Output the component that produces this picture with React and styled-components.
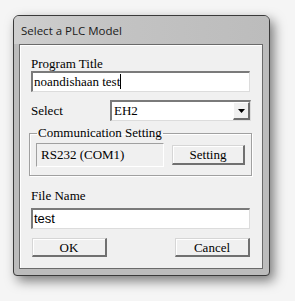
import React from 'react';
import styled, { createGlobalStyle } from 'styled-components';

const GlobalStyle = createGlobalStyle`
  body {
    margin: 0;
    background: #f5f5f5;
  }
`;

const Page = styled.div`
  padding: 15px 0 0 13px;
  height: 301px;
  box-sizing: border-box;
`;

const Window = styled.div`
  width: 257px;
  height: 261px;
  box-sizing: border-box;
  border: 1px solid #3a3a3a;
  border-radius: 6px 6px 4px 4px;
  background: #bcbcbc;
  box-shadow: 4px 5px 12px rgba(0, 0, 0, 0.5);
  display: flex;
  flex-direction: column;
`;

const TitleBar = styled.div`
  height: 28px;
  padding-left: 7px;
  display: flex;
  align-items: center;
  border-radius: 5px 5px 0 0;
  background: linear-gradient(90deg, #cfcfcf 0%, #c3c3c3 40%, #bcbcbc 100%);
  font-family: "Open Sans", "Noto Sans", sans-serif;
  font-size: 11.5px;
  color: #1a1a1a;
`;

const Client = styled.div`
  flex: 1;
  margin: 0 6px 6px 5px;
  border: 1px solid #6a6a6a;
  box-shadow: inset 1px 1px 0 #ffffff;
  background: #f0f0f0;
  padding: 11px 12px 0 11px;
  font-family: "Liberation Serif", "Times New Roman", serif;
  font-size: 13px;
  color: #000;
  display: flex;
  flex-direction: column;
`;

const Label = styled.div`
  height: 15px;
  line-height: 15px;
  margin-top: ${p => p.$top || 0}px;
`;

const TextBox = styled.div`
  height: 21px;
  box-sizing: border-box;
  background: #fff;
  border-style: solid;
  border-width: 2px 1px 1px 2px;
  border-color: #7a7a7a #dcdcdc #dcdcdc #7a7a7a;
  padding-left: 1px;
  line-height: 18px;
  margin-top: ${p => p.$top || 0}px;
  font-family: ${p => (p.$sans ? '"Liberation Sans", Arial, sans-serif' : 'inherit')};
`;

const Caret = styled.span`
  display: inline-block;
  width: 1px;
  height: 15px;
  background: #000;
  vertical-align: -3px;
`;

const SelectRow = styled.div`
  display: flex;
  align-items: center;
  margin-top: 8px;
  height: 21px;
`;

const SelectLabel = styled.div`
  width: 79px;
`;

const Combo = styled.div`
  flex: 1;
  height: 21px;
  box-sizing: border-box;
  display: flex;
  background: #fff;
  border-style: solid;
  border-width: 2px 1px 1px 2px;
  border-color: #7a7a7a #dcdcdc #dcdcdc #7a7a7a;
  margin-right: -1px;
`;

const ComboText = styled.div`
  flex: 1;
  padding-left: 2px;
  line-height: 18px;
`;

const ComboButton = styled.div`
  width: 17px;
  box-sizing: border-box;
  background: #f0f0f0;
  border-style: solid;
  border-width: 1px 2px 2px 1px;
  border-color: #ffffff #6e6e6e #6e6e6e #ffffff;
  display: flex;
  align-items: center;
  justify-content: center;
`;

const Group = styled.fieldset`
  margin: 5px -2px 0 -2px;
  padding: 3px 6px 8px 6px;
  border: 1px solid #a0a0a0;
  box-shadow: inset 1px 1px 0 #fff, 1px 1px 0 #fff;
  display: flex;
  align-items: center;
  gap: 8px;
  min-width: 0;
`;

const Legend = styled.legend`
  padding: 0 1px;
  margin-left: 1px;
  line-height: 14px;
`;

const StaticBox = styled.div`
  width: 128px;
  height: 24px;
  box-sizing: border-box;
  border-style: solid;
  border-width: 1px;
  border-color: #a0a0a0 #ffffff #ffffff #a0a0a0;
  padding-left: 4px;
  line-height: 22px;
`;

const Button = styled.div`
  width: ${p => p.$w}px;
  height: ${p => p.$h || 19}px;
  box-sizing: border-box;
  background: #f0f0f0;
  border-style: solid;
  border-width: 1px 2px 2px 1px;
  border-color: #d6d6d6 #707070 #707070 #d6d6d6;
  box-shadow: inset 1px 1px 0 #ffffff;
  display: flex;
  align-items: center;
  justify-content: center;
  line-height: 1;
`;

const ButtonRow = styled.div`
  display: flex;
  justify-content: space-between;
  margin-top: 9px;
  padding-left: 1px;
`;

export default function App() {
  return (
    <>
      <GlobalStyle />
      <Page>
        <Window>
          <TitleBar>Select a PLC Model</TitleBar>
          <Client>
            <Label>Program Title</Label>
            <TextBox>
              noandishaan test<Caret />
            </TextBox>
            <SelectRow>
              <SelectLabel>Select</SelectLabel>
              <Combo>
                <ComboText>EH2</ComboText>
                <ComboButton>
                  <svg width="7" height="4" viewBox="0 0 7 4">
                    <path d="M0 0 H7 L3.5 4 Z" fill="#000" />
                  </svg>
                </ComboButton>
              </Combo>
            </SelectRow>
            <Group>
              <Legend>Communication Setting</Legend>
              <StaticBox>RS232 (COM1)</StaticBox>
              <Button $w={73} $h={20}>Setting</Button>
            </Group>
            <Label $top={12}>File Name</Label>
            <TextBox $top={5} $sans>test</TextBox>
            <ButtonRow>
              <Button $w={75}>OK</Button>
              <Button $w={75}>Cancel</Button>
            </ButtonRow>
          </Client>
        </Window>
      </Page>
    </>
  );
}
